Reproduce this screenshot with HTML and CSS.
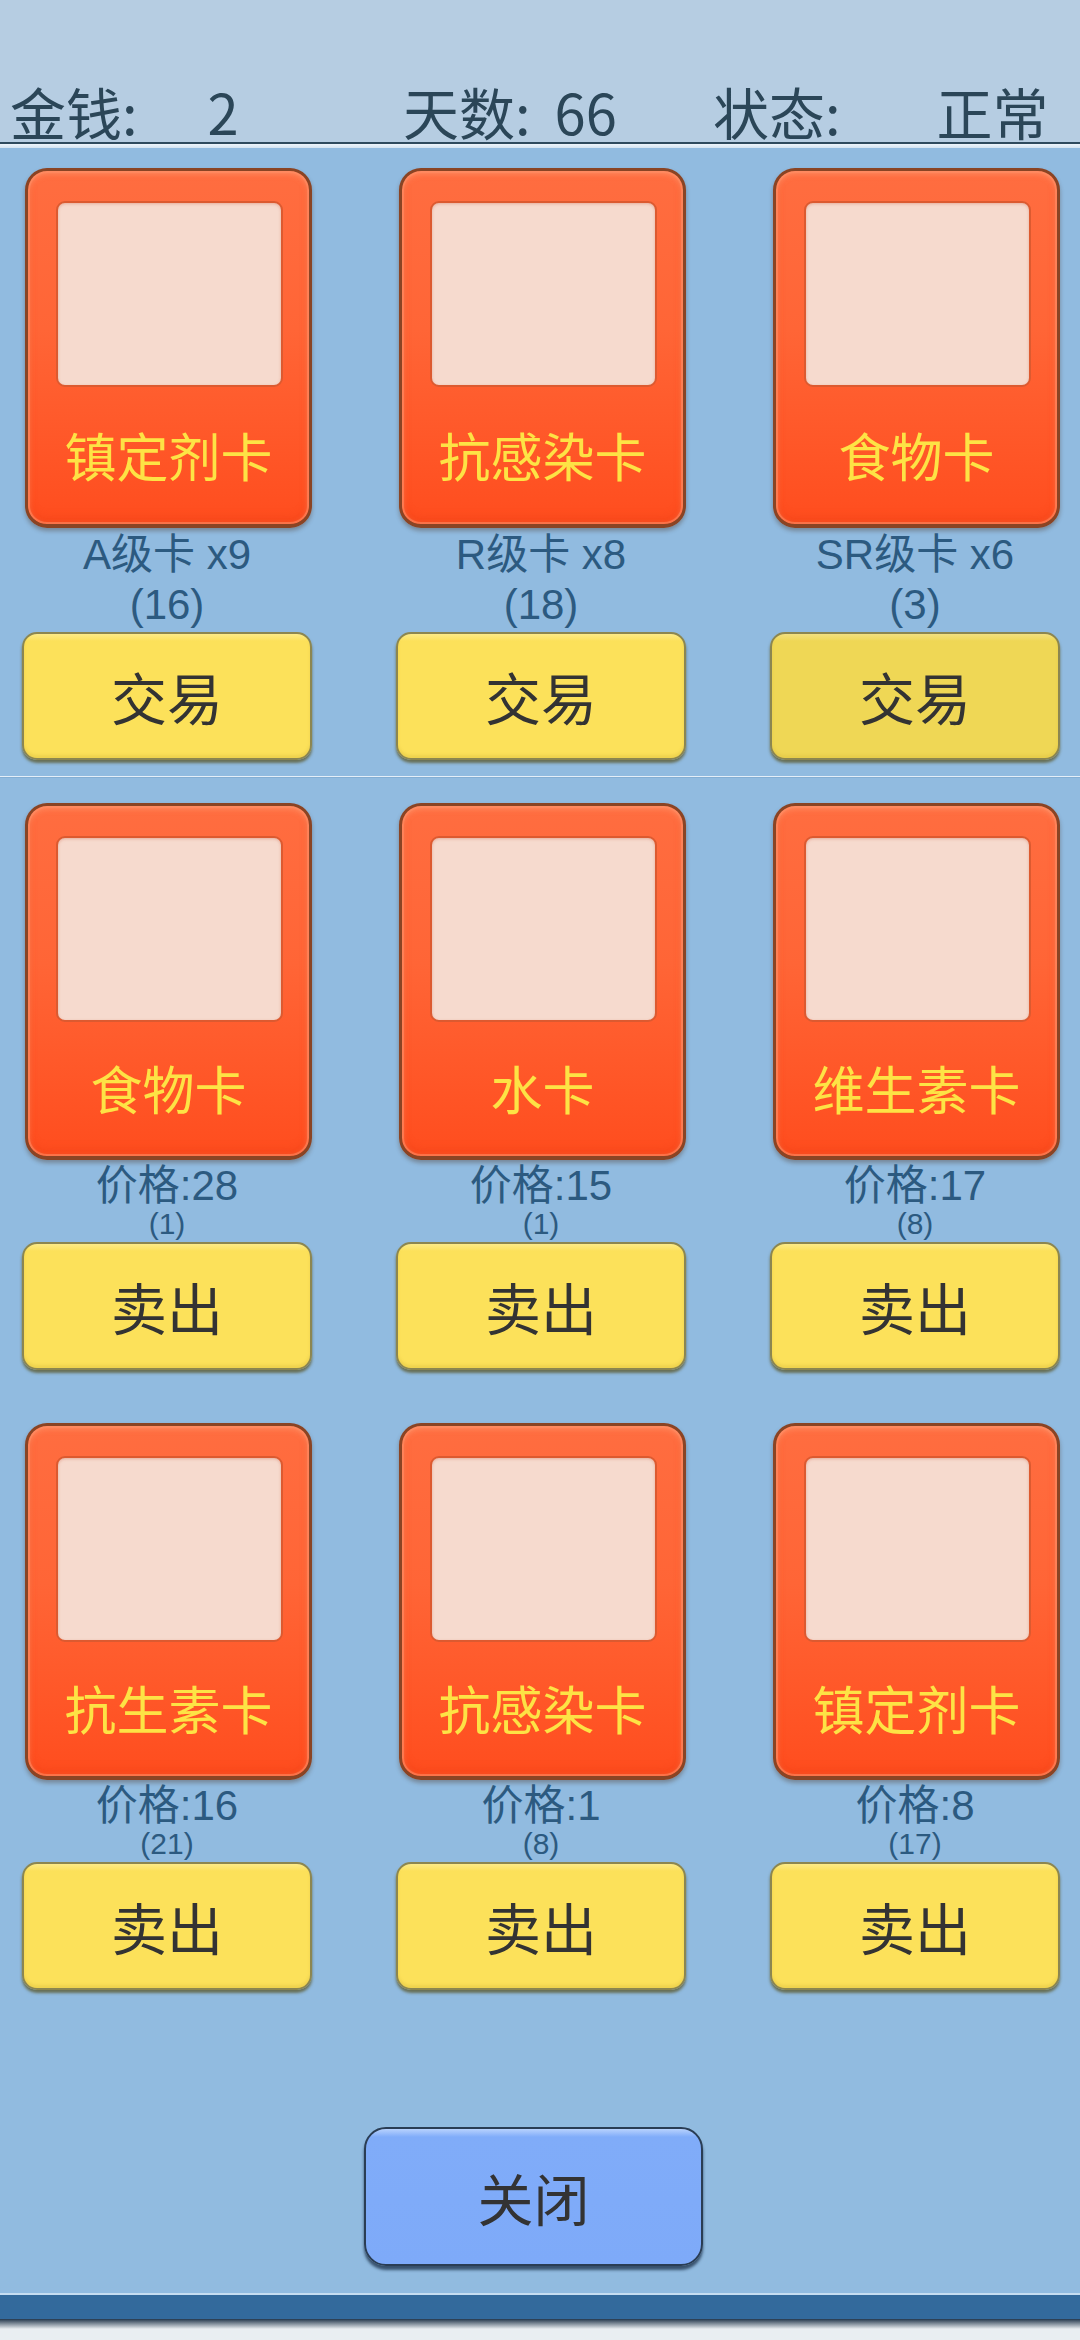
FILE: index.html
```html
<!DOCTYPE html>
<html lang="zh">
<head>
<meta charset="utf-8">
<title>交易</title>
<link rel="stylesheet" href="styles.css">
</head>
<body>
<div class="screen">
  <div class="header">
    <div class="stat stat-money"><span class="stat-label">金钱:</span><span class="stat-value">2</span></div>
    <div class="stat stat-days"><span class="stat-label">天数:</span><span class="stat-value">66</span></div>
    <div class="stat stat-state"><span class="stat-label">状态:</span><span class="stat-value">正常</span></div>
  </div>
  <div class="rule-dark"></div>
  <div class="rule-light"></div>

  <div class="main">
    <div class="grid grid-buy">
      <div class="cell">
        <div class="card"><div class="pane"></div><div class="card-title">镇定剂卡</div></div>
        <div class="info info-big">A级卡 x9</div>
        <div class="info info-big">(16)</div>
        <div class="btn btn-yellow">交易</div>
      </div>
      <div class="cell">
        <div class="card"><div class="pane"></div><div class="card-title">抗感染卡</div></div>
        <div class="info info-big">R级卡 x8</div>
        <div class="info info-big">(18)</div>
        <div class="btn btn-yellow">交易</div>
      </div>
      <div class="cell">
        <div class="card"><div class="pane"></div><div class="card-title">食物卡</div></div>
        <div class="info info-big">SR级卡 x6</div>
        <div class="info info-big">(3)</div>
        <div class="btn btn-yellow btn-pressed">交易</div>
      </div>
    </div>

    <div class="divider"></div>

    <div class="grid grid-sell">
      <div class="cell">
        <div class="card card-sell"><div class="pane"></div><div class="card-title">食物卡</div></div>
        <div class="info info-price">价格:28</div>
        <div class="info info-count">(1)</div>
        <div class="btn btn-yellow">卖出</div>
      </div>
      <div class="cell">
        <div class="card card-sell"><div class="pane"></div><div class="card-title">水卡</div></div>
        <div class="info info-price">价格:15</div>
        <div class="info info-count">(1)</div>
        <div class="btn btn-yellow">卖出</div>
      </div>
      <div class="cell">
        <div class="card card-sell"><div class="pane"></div><div class="card-title">维生素卡</div></div>
        <div class="info info-price">价格:17</div>
        <div class="info info-count">(8)</div>
        <div class="btn btn-yellow">卖出</div>
      </div>
      <div class="cell">
        <div class="card card-sell"><div class="pane"></div><div class="card-title">抗生素卡</div></div>
        <div class="info info-price">价格:16</div>
        <div class="info info-count">(21)</div>
        <div class="btn btn-yellow">卖出</div>
      </div>
      <div class="cell">
        <div class="card card-sell"><div class="pane"></div><div class="card-title">抗感染卡</div></div>
        <div class="info info-price">价格:1</div>
        <div class="info info-count">(8)</div>
        <div class="btn btn-yellow">卖出</div>
      </div>
      <div class="cell">
        <div class="card card-sell"><div class="pane"></div><div class="card-title">镇定剂卡</div></div>
        <div class="info info-price">价格:8</div>
        <div class="info info-count">(17)</div>
        <div class="btn btn-yellow">卖出</div>
      </div>
    </div>

    <div class="btn btn-close">关闭</div>
  </div>

  <div class="bottom-bar">
    <div class="bar-light"></div>
    <div class="bar-blue"></div>
    <div class="bar-shadow"></div>
  </div>
</div>
</body>
</html>
```

FILE: styles.css
```css
html, body {
  margin: 0;
  padding: 0;
}
body {
  width: 1080px;
  height: 2340px;
  overflow: hidden;
  background: #e9eef2;
  font-family: "Noto Sans CJK SC", "Noto Sans", sans-serif;
}
.screen {
  width: 1080px;
  height: 2340px;
  display: flex;
  flex-direction: column;
  overflow: hidden;
}

/* header */
.header {
  height: 142px;
  box-sizing: border-box;
  padding: 86px 0 0 10px;
  background: #b6cde2;
  display: flex;
  flex-shrink: 0;
  color: #2b4658;
  font-size: 56px;
  line-height: 50px;
}
.stat {
  display: flex;
  white-space: nowrap;
}
.stat-money { width: 393px; }
.stat-days { width: 310px; }
.stat-money .stat-value { margin-left: 70px; }
.stat-days .stat-value { margin-left: 24px; }
.stat-state .stat-value { margin-left: 96px; }

.rule-dark {
  height: 2px;
  background: #2e4a5e;
  flex-shrink: 0;
}
.rule-light {
  height: 4px;
  background: linear-gradient(#eef5fb, #d2e3f2);
  flex-shrink: 0;
}

/* main */
.main {
  flex: 1;
  background: #91bbe0;
  padding-top: 20px;
  display: flex;
  flex-direction: column;
}
.grid {
  display: grid;
  grid-template-columns: repeat(3, 290px);
  column-gap: 84px;
  padding-left: 22px;
}
.grid-sell {
  row-gap: 53px;
}
.cell {
  display: flex;
  flex-direction: column;
  align-items: stretch;
}

/* card */
.card {
  width: 287px;
  height: 360px;
  margin-left: 3px;
  box-sizing: border-box;
  border: 3px solid #8a4424;
  border-bottom-width: 4px;
  border-radius: 22px;
  background: linear-gradient(#ff6d40 0%, #ff6536 45%, #ff4d1e 100%);
  box-shadow:
    inset 0 0 0 2px rgba(255, 140, 100, 0.55),
    inset 0 2px 6px rgba(255, 180, 140, 0.6),
    inset 0 -6px 8px rgba(230, 60, 20, 0.35),
    0 3px 4px rgba(70, 40, 20, 0.35);
  display: flex;
  flex-direction: column;
}
.card-sell {
  height: 357px;
}
.pane {
  height: 186px;
  margin: 30px 26px 0 28px;
  box-sizing: border-box;
  border: 2px solid #dc5a30;
  border-radius: 9px;
  background: #f6dace;
  box-shadow: inset 0 1px 3px rgba(200, 90, 60, 0.35);
}
.card-title {
  flex: 1;
  display: flex;
  align-items: center;
  justify-content: center;
  padding-bottom: 2px;
  color: #fde345;
  font-size: 52px;
  line-height: 52px;
  white-space: nowrap;
}

/* info text */
.info {
  text-align: center;
  color: #2c5a80;
  font-family: "Liberation Sans", "Noto Sans CJK SC", sans-serif;
  white-space: nowrap;
}
.info-big {
  font-size: 42px;
  line-height: 50px;
}
.card + .info-big {
  margin-top: 2px;
}
.info-price {
  font-size: 42px;
  line-height: 44px;
  margin-top: 4px;
}
.info-count {
  font-size: 30px;
  line-height: 32px;
}

/* buttons */
.btn {
  box-sizing: border-box;
  display: flex;
  align-items: center;
  justify-content: center;
  color: #333333;
  font-size: 56px;
  line-height: 56px;
  white-space: nowrap;
}
.btn-yellow {
  height: 128px;
  margin-top: 2px;
  border: 2px solid #8c8650;
  border-radius: 15px;
  background: linear-gradient(#fdeb88 0px, #fce15a 7px, #fce15a 100%);
  box-shadow:
    inset 0 -3px 3px rgba(220, 190, 60, 0.4),
    0 3px 3px rgba(90, 85, 40, 0.75);
}
.btn-pressed {
  background: linear-gradient(#f3e080 0px, #efd755 7px, #efd755 100%);
}

.divider {
  height: 1px;
  margin-top: 16px;
  background: #e4eef8;
  box-shadow: 0 1px 0 #84aed3;
  margin-bottom: 26px;
}

.btn-close {
  width: 339px;
  height: 139px;
  margin-top: 137px;
  margin-left: 364px;
  border: 2px solid #2a3d54;
  border-radius: 22px;
  background: linear-gradient(#b8d2fd 0px, #80acf9 8px, #7eaaf9 100%);
  box-shadow: 0 4px 3px rgba(25, 45, 70, 0.75);
}

/* bottom bar */
.bottom-bar {
  height: 47px;
  flex-shrink: 0;
  display: flex;
  flex-direction: column;
  background: #e9eef2;
}
.bar-light {
  height: 2px;
  background: #c6ddf1;
}
.bar-blue {
  height: 24px;
  background: #336a9c;
}
.bar-shadow {
  height: 10px;
  background: linear-gradient(#24384d, #e9eef2);
}
```
